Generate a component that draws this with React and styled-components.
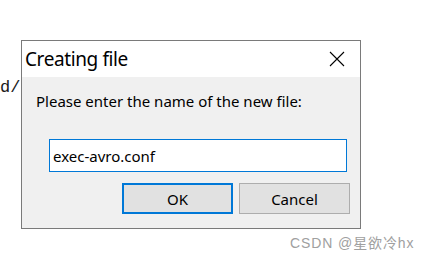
import React from "react";
import styled, { createGlobalStyle } from "styled-components";

const Global = createGlobalStyle`
  html, body { margin: 0; padding: 0; background: #ffffff; }
  body { width: 435px; height: 258px; overflow: hidden; }
`;

const Page = styled.div`
  position: relative;
  width: 435px;
  height: 258px;
  background: #ffffff;
`;

const Backdrop = styled.div`
  padding: 79px 0 0 0;
  font-family: "Liberation Mono", monospace;
  font-size: 17px;
  line-height: 18px;
  color: #1a1a1a;
`;

const Dialog = styled.div`
  position: absolute;
  left: 21px;
  top: 40px;
  width: 338px;
  height: 187px;
  border: 1px solid #7a7a7a;
  background: #f0f0f0;
  display: flex;
  flex-direction: column;
`;

const TitleBar = styled.div`
  height: 36px;
  background: #ffffff;
  display: flex;
  align-items: center;
  justify-content: space-between;
  padding: 0 0 0 3px;
`;

const Title = styled.div`
  font-family: "Noto Sans", sans-serif;
  font-size: 19px;
  letter-spacing: -0.4px;
  color: #000;
`;

const Close = styled.div`
  width: 46px;
  height: 36px;
  display: flex;
  align-items: center;
  justify-content: center;
`;

const Body = styled.div`
  flex: 1;
  display: flex;
  flex-direction: column;
  padding: 14px 10px 0 14px;
  font-family: "Noto Sans", sans-serif;
`;

const Label = styled.div`
  font-size: 15px;
  line-height: 20px;
  color: #000;
`;

const Input = styled.div`
  margin: 28px 3px 0 13px;
  height: 31px;
  border: 1px solid #0078d7;
  background: #fff;
  display: flex;
  align-items: center;
  padding-left: 3px;
  font-size: 15px;
  color: #000;
`;

const Buttons = styled.div`
  display: flex;
  justify-content: flex-end;
  gap: 6px;
  margin-top: 11px;
`;

const Button = styled.div`
  box-sizing: border-box;
  width: 111px;
  height: 31px;
  background: #e1e1e1;
  border: ${(p) => (p.$primary ? "2px solid #0078d7" : "1px solid #adadad")};
  display: flex;
  align-items: center;
  justify-content: center;
  font-size: 15px;
  color: #000;
`;

const Watermark = styled.div`
  position: absolute;
  left: 290px;
  top: 232px;
  font-family: "Liberation Sans", "Noto Sans CJK SC", sans-serif;
  font-size: 14px;
  letter-spacing: 0.9px;
  color: #a0a0a0;
`;

export default function App() {
  return (
    <Page>
      <Global />
      <Backdrop>d/</Backdrop>
      <Dialog>
        <TitleBar>
          <Title>Creating file</Title>
          <Close>
            <svg width="16" height="16" viewBox="0 0 16 16">
              <path d="M1 1 L15 15 M15 1 L1 15" stroke="#000" strokeWidth="1.1" fill="none" />
            </svg>
          </Close>
        </TitleBar>
        <Body>
          <Label>Please enter the name of the new file:</Label>
          <Input>exec-avro.conf</Input>
          <Buttons>
            <Button $primary>OK</Button>
            <Button>Cancel</Button>
          </Buttons>
        </Body>
      </Dialog>
      <Watermark>CSDN @星欲冷hx</Watermark>
    </Page>
  );
}
